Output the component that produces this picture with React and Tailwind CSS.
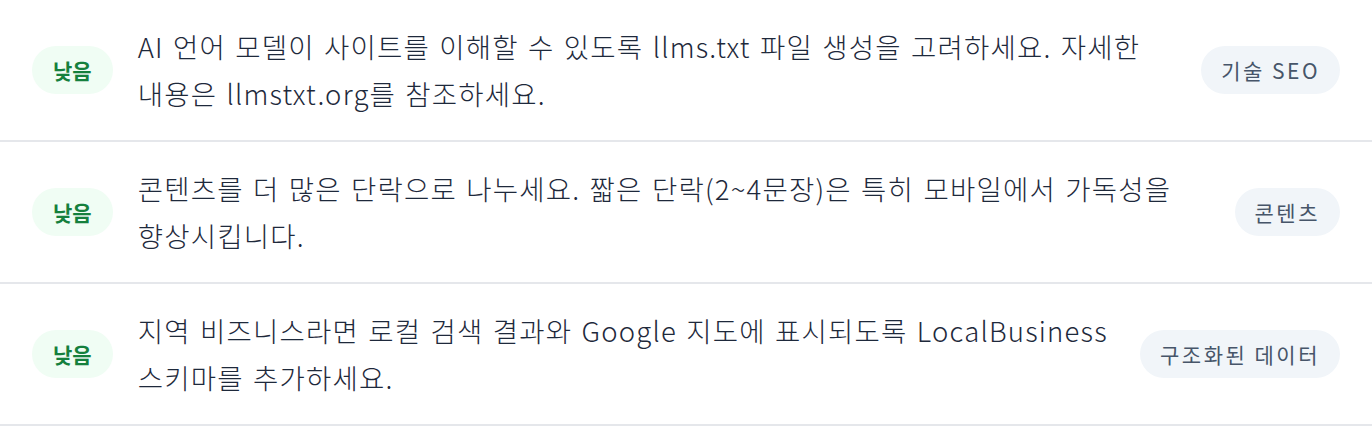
const rows = [
  {
    level: "낮음",
    text: "AI 언어 모델이 사이트를 이해할 수 있도록 llms.txt 파일 생성을 고려하세요. 자세한 내용은 llmstxt.org를 참조하세요.",
    tag: "기술 SEO",
  },
  {
    level: "낮음",
    text: "콘텐츠를 더 많은 단락으로 나누세요. 짧은 단락(2~4문장)은 특히 모바일에서 가독성을 향상시킵니다.",
    tag: "콘텐츠",
  },
  {
    level: "낮음",
    text: "지역 비즈니스라면 로컬 검색 결과와 Google 지도에 표시되도록 LocalBusiness 스키마를 추가하세요.",
    tag: "구조화된 데이터",
  },
];

export default function App() {
  return (
    <div
      className="w-[1372px] bg-white"
      style={{ fontFamily: '"Noto Sans CJK KR", "Noto Sans", sans-serif' }}
    >
      {rows.map((row, i) => (
        <div
          key={i}
          className="flex items-center gap-5 h-[142px] px-8 border-b-2 border-[#e5e7eb]"
        >
          {/* severity badge */}
          <span className="shrink-0 rounded-full bg-[#f0fdf4] text-[#15803d] font-bold text-[21px] leading-none px-[21px] h-12 flex items-center">
            {row.level}
          </span>

          <p className="flex-1 ml-[5px] text-[27.5px] leading-[47px] font-light text-[#1e293b] break-keep tracking-[1.2px] [word-spacing:2px]">
            {row.text}
          </p>

          {/* category tag */}
          <span className="shrink-0 rounded-full bg-[#f1f5f9] text-[#475569] text-[21px] leading-none tracking-[2.5px] px-5 h-12 flex items-center">
            {row.tag}
          </span>
        </div>
      ))}
    </div>
  );
}
